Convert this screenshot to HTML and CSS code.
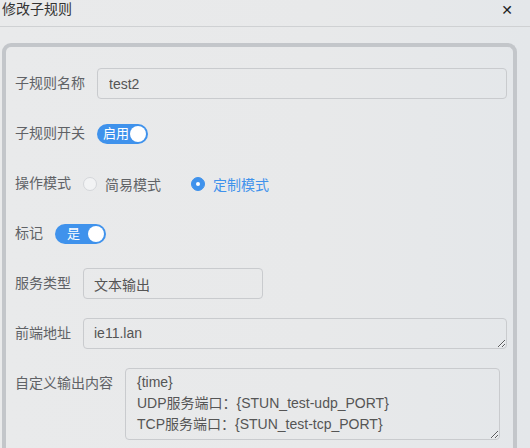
FILE: index.html
```html
<!DOCTYPE html>
<html lang="zh-CN">
<head>
<meta charset="utf-8">
<title>修改子规则</title>
<link rel="stylesheet" href="styles.css">
</head>
<body>
<div class="dialog">
  <div class="header">
    <span class="title">修改子规则</span>
    <span class="close">✕</span>
  </div>
  <div class="panel">
    <div class="row">
      <label class="label">子规则名称</label>
      <input class="input grow" type="text" value="test2">
    </div>
    <div class="row">
      <label class="label">子规则开关</label>
      <span class="switch"><span class="switch-text">启用</span><span class="knob"></span></span>
    </div>
    <div class="row">
      <label class="label">操作模式</label>
      <span class="radio"><span class="radio-dot"></span><span class="radio-label">简易模式</span></span>
      <span class="radio checked"><span class="radio-dot"></span><span class="radio-label">定制模式</span></span>
    </div>
    <div class="row">
      <label class="label">标记</label>
      <span class="switch small"><span class="switch-text">是</span><span class="knob"></span></span>
    </div>
    <div class="row">
      <label class="label">服务类型</label>
      <input class="input narrow" type="text" value="文本输出">
    </div>
    <div class="row">
      <label class="label">前端地址</label>
      <textarea class="textarea grow addr">ie11.lan</textarea>
    </div>
    <div class="row">
      <label class="label">自定义输出内容</label>
      <textarea class="textarea grow content">{time}
UDP服务端口：{STUN_test-udp_PORT}
TCP服务端口：{STUN_test-tcp_PORT}</textarea>
    </div>
  </div>
</div>
</body>
</html>
```
FILE: styles.css
```css
html, body {
  margin: 0;
  padding: 0;
  background: #e8e9eb;
  font-family: "Liberation Sans", "Noto Sans CJK SC", sans-serif;
  overflow: hidden;
}
.dialog {
  width: 530px;
  height: 448px;
  overflow: hidden;
  background: linear-gradient(90deg, #e9eaeb 0%, #e8e9ea 60%, #e4e7ea 100%);
}
.header {
  height: 26px;
  border-bottom: 1px solid #cfd1d3;
  display: flex;
  justify-content: space-between;
  align-items: flex-start;
  padding: 0 17px 0 2px;
}
.title {
  font-size: 14px;
  line-height: 19px;
  color: #333;
}
.close {
  font-size: 14px;
  line-height: 20px;
  font-weight: bold;
  color: #222;
  font-family: "DejaVu Sans", sans-serif;
}
.panel {
  box-sizing: border-box;
  margin: 16px 0 0 2px;
  width: 515px;
  height: 405px;
  border: 4px solid #c3c6ca;
  border-bottom: none;
  border-radius: 9px 9px 0 0;
  padding: 21px 6px 0 9px;
  display: flex;
  flex-direction: column;
  gap: 19px;
}
.row {
  display: flex;
  align-items: center;
  min-height: 31px;
  gap: 12px;
}
.row:last-child { align-items: flex-start; }
.label {
  font-size: 14px;
  color: #606266;
  white-space: nowrap;
  line-height: 31px;
}
.input, .textarea {
  box-sizing: border-box;
  height: 31px;
  border: 1px solid #c9cbce;
  border-radius: 4px;
  background: transparent;
  font-family: "Liberation Sans", "Noto Sans CJK SC", sans-serif;
  font-size: 14px;
  color: #555;
  padding: 0 10px;
  outline: none;
}
.grow { flex: 1; min-width: 0; }
.row:first-child .input { padding-left: 11px; }
.narrow { width: 180px; }
.textarea {
  resize: both;
  line-height: 21px;
  padding: 3px 10px;
  overflow: hidden;
}
.addr { height: 31px; padding-top: 4px; }
.content { height: 72px; margin-right: 7px; padding-left: 11px; }
.switch {
  position: relative;
  display: inline-flex;
  align-items: center;
  width: 51px;
  height: 20px;
  border-radius: 10px;
  background: #3f92ec;
  box-sizing: border-box;
}
.switch-text {
  color: #fff;
  font-size: 13px;
  line-height: 20px;
  padding-left: 6px;
}
.switch.small .switch-text { padding-left: 12px; }
.knob {
  position: absolute;
  right: 2px;
  top: 2px;
  width: 16px;
  height: 16px;
  border-radius: 50%;
  background: #fff;
}
.radio {
  display: inline-flex;
  align-items: center;
  gap: 8px;
  margin-right: 18px;
}
.radio-dot {
  box-sizing: border-box;
  width: 14px;
  height: 14px;
  border-radius: 50%;
  border: 1px solid #d4d6da;
  background: #f2f3f4;
  position: relative;
}
.radio.checked .radio-dot {
  background: #3f92ec;
  border-color: #3f92ec;
}
.radio.checked .radio-dot::after {
  content: "";
  position: absolute;
  left: 4px;
  top: 4px;
  width: 4px;
  height: 4px;
  border-radius: 50%;
  background: #fff;
}
.radio-label {
  font-size: 14px;
  color: #606266;
}
.radio.checked .radio-label { color: #3f92ec; }
```
